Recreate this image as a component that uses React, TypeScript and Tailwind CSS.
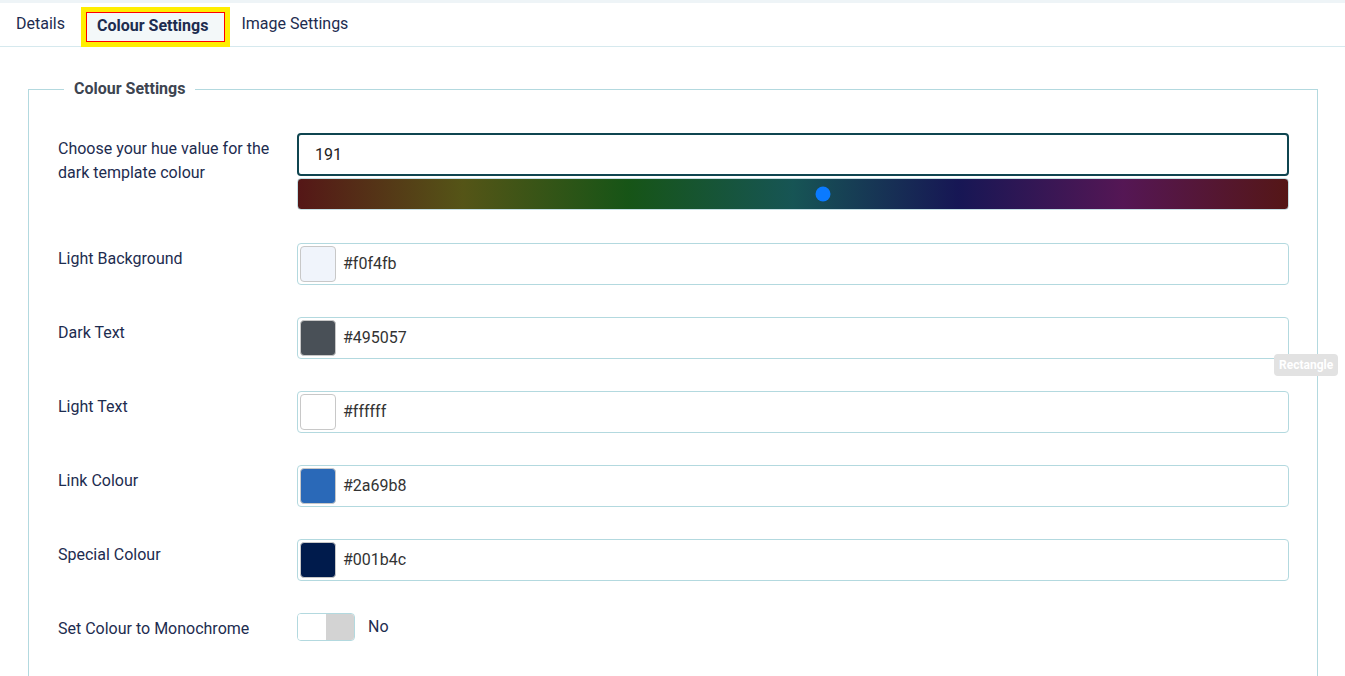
import React from "react";

type Swatch = { label: string; value: string; swatch: string };

const colours: Swatch[] = [
  { label: "Light Background", value: "#f0f4fb", swatch: "bg-[#f0f4fb]" },
  { label: "Dark Text", value: "#495057", swatch: "bg-[#495057]" },
  { label: "Light Text", value: "#ffffff", swatch: "bg-[#ffffff]" },
  { label: "Link Colour", value: "#2a69b8", swatch: "bg-[#2a69b8]" },
  { label: "Special Colour", value: "#001b4c", swatch: "bg-[#001b4c]" },
];

const HUE = 191;

const Label = ({ children }: { children: React.ReactNode }) => (
  <div className="w-[239px] shrink-0 pt-[4px] pr-4 text-[16px] leading-6 text-[#1d2c4f]">{children}</div>
);

const ColourRow = ({ item }: { item: Swatch }) => (
  <div className="flex">
    <Label>{item.label}</Label>
    <div className="flex h-[42px] flex-1 items-center rounded border border-[#b3d9df] bg-white pl-[2px]">
      <div className={`h-9 w-9 rounded border border-[#c8c8c8] ${item.swatch}`} />
      <span className="ml-[7px] text-[16px] text-[#333]">{item.value}</span>
    </div>
  </div>
);

export default function App() {
  return (
    <div className="relative min-h-screen bg-white font-['Roboto',sans-serif]">
      <div className="h-[3px] bg-[#eef4f7]" />

      {/* tabs */}
      <div className="flex h-[44px] items-stretch border-b border-[#d6e9ee] pl-4 text-[16px] text-[#1d2c4f]">
        <button className="pr-4 pb-[1px]">Details</button>
        <div className="mt-1 mb-[-1px] border-[5px] border-[#ffee00]">
          <div className="flex h-full items-center border border-[#ff0000] bg-[#f3f8f9] pl-[10px] pr-4 pb-[2px] font-bold">
            Colour Settings
          </div>
        </div>
        <button className="pl-[11px] pb-[1px]">Image Settings</button>
      </div>

      <div className="pl-[28px] pr-[27px] pt-[30px]">
        <fieldset className="border border-[#b3d9df] px-[29px] pr-[28px] pb-10">
          <legend className="ml-[6px] px-[10px] text-[16px] font-bold text-[#3d4450]">Colour Settings</legend>

          <div className="flex flex-col gap-8 pt-[32px]">
            {/* hue picker */}
            <div className="mb-px flex">
              <Label>Choose your hue value for the dark template colour</Label>
              <div className="flex flex-1 flex-col gap-[2px]">
                <div className="flex h-[43px] items-center rounded border-2 border-[#0f4550] bg-white pl-4 text-[16px] text-[#222]">
                  {HUE}
                </div>
                <div className="relative h-8 rounded border border-[#c5dfe4] bg-[linear-gradient(to_right,hsl(0,58%,21%),hsl(60,58%,21%),hsl(120,58%,21%),hsl(180,58%,21%),hsl(240,58%,21%),hsl(300,58%,21%),hsl(360,58%,21%))]">
                  <div
                    className="absolute top-1/2 h-[15px] w-[15px] -translate-x-1/2 -translate-y-1/2 rounded-full bg-[#0a7aff]"
                    style={{ left: `${(HUE / 360) * 100}%` }}
                  />
                </div>
              </div>
            </div>

            {colours.map((c) => (
              <ColourRow key={c.label} item={c} />
            ))}

            {/* monochrome toggle */}
            <div className="flex">
              <Label>Set Colour to Monochrome</Label>
              <div className="flex items-center gap-[13px]">
                <div className="flex h-7 w-[58px] overflow-hidden rounded border border-[#b3d9df]">
                  <div className="flex-1 bg-white" />
                  <div className="flex-1 bg-[#d3d3d3]" />
                </div>
                <span className="text-[16px] text-[#1d2c4f]">No</span>
              </div>
            </div>
          </div>
        </fieldset>
      </div>

      <div className="absolute left-[1274px] top-[354px] rounded-sm bg-[#e2e2e2] px-[5px] py-[2px] text-[12px] font-bold text-white">
        Rectangle
      </div>
    </div>
  );
}
